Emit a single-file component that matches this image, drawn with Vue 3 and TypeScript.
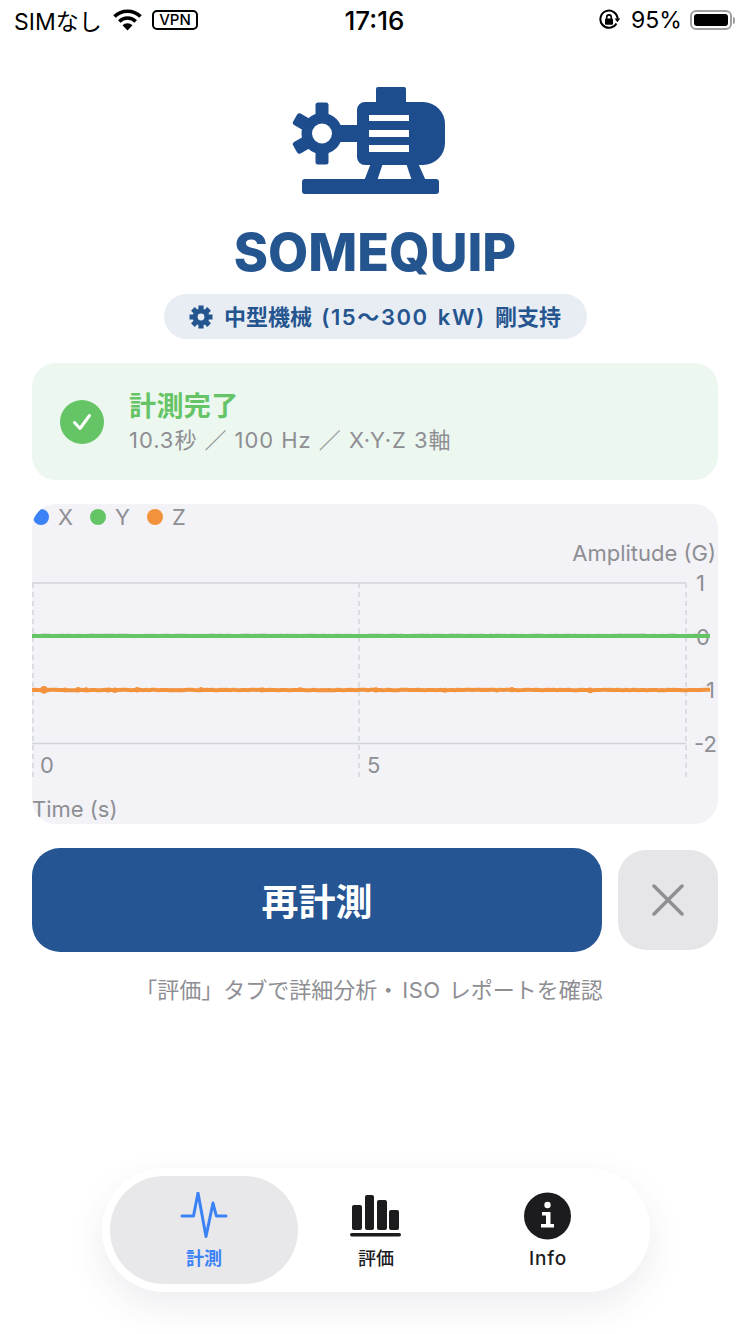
<template>
  <div class="page">
    <header class="status-bar">
      <div class="status-left">
        <span class="carrier">SIMなし</span>
        <svg class="wifi" width="29" height="22" viewBox="0 0 29 22">
          <path d="M1.5 7.6a18.4 18.4 0 0 1 26 0" />
          <path d="M6.3 12.4a11.6 11.6 0 0 1 16.4 0" />
          <path class="wifi-dot" d="M14.5 21.5l-5-5.2a7 7 0 0 1 10 0z" />
        </svg>
        <span class="vpn">VPN</span>
      </div>
      <span class="clock">17:16</span>
      <div class="status-right">
        <svg width="22" height="22" viewBox="0 0 22 22">
          <path class="lock-ring" d="M18.4 14.6A8.6 8.6 0 1 1 19.6 10" />
          <path class="lock-fill" d="M16.6 9.6h5.6l-2.8 3.6z" />
          <rect class="lock-fill" x="7" y="9.6" width="8" height="6.2" rx="1" />
          <path class="lock-ring thin" d="M8.7 10V8.2a2.3 2.3 0 0 1 4.6 0V10" />
        </svg>
        <span class="battery-text">95%</span>
        <div class="battery">
          <div class="battery-level"></div>
        </div>
        <div class="battery-cap"></div>
      </div>
    </header>

    <main class="content">
      <svg class="logo" width="153" height="107" viewBox="292 87 153 107">
        <circle cx="322" cy="133.5" r="20.5" />
        <rect
          v-for="angle in [0, 180, -60, -120]"
          :key="angle"
          x="315.5"
          y="102.5"
          width="13"
          height="16"
          rx="2.5"
          :transform="`rotate(${angle} 322 133.5)`"
        />
        <circle class="logo-hole" cx="322" cy="133.5" r="10" />
        <rect x="338" y="125" width="28" height="17" />
        <rect x="376" y="87" width="30" height="20" rx="2" />
        <path
          fill-rule="evenodd"
          d="M365 102h58a22 22 0 0 1 22 22v19a22 22 0 0 1-22 22h-58a8 8 0 0 1-8-8v-47a8 8 0 0 1 8-8zM369 115v6h40v-6zM369 130v7h40v-7zM369 145v7h40v-7z"
        />
        <path d="M371 163h12l-6 18h-13zM406 163h12l8 18h-14z" />
        <rect x="302" y="179" width="137" height="15" rx="3" />
      </svg>

      <h1 class="title">SOMEQUIP</h1>

      <div class="machine-pill">
        <svg width="24" height="24" viewBox="0 0 24 24">
          <path :d="pillGear" fill-rule="evenodd" />
        </svg>
        <span class="pill-text">中型機械<span class="latin"> (15～300 kW) </span>剛支持</span>
      </div>

      <section class="result-card">
        <div class="check">
          <svg width="44" height="44" viewBox="0 0 44 44">
            <path d="M14.5 22.5l5.5 6 9.5-13" />
          </svg>
        </div>
        <div class="result-text">
          <div class="result-title">計測完了</div>
          <div class="result-sub">10.3秒 ／ 100 Hz ／ X·Y·Z 3軸</div>
        </div>
      </section>

      <section class="chart-card">
        <div class="legend">
          <div v-for="item in legend" :key="item.name" class="legend-item">
            <i class="legend-dot" :style="{ background: item.color }"></i>
            <span>{{ item.name }}</span>
          </div>
        </div>
        <svg class="chart" width="686" height="294" viewBox="32 530 686 294">
          <text class="axis" x="716" y="561" text-anchor="end">Amplitude (G)</text>
          <line class="grid" x1="32" y1="583" x2="686" y2="583" />
          <line class="grid" x1="32" y1="743.5" x2="686" y2="743.5" />
          <line v-for="x in [33, 359, 686]" :key="x" class="grid-dash" :x1="x" y1="583" :x2="x" y2="779" />
          <text class="axis" x="696" y="591">1</text>
          <text class="axis" x="696" y="645">0</text>
          <text class="axis" x="696" y="698">-1</text>
          <text class="axis" x="694" y="752">-2</text>
          <text class="axis" x="40" y="773">0</text>
          <text class="axis" x="367" y="773">5</text>
          <text class="axis" x="32" y="817">Time (s)</text>
          <polyline class="trace noise" :points="noiseLine" />
          <line class="trace blue" x1="32" y1="637" x2="710" y2="637" />
          <line class="trace green" x1="32" y1="636" x2="710" y2="636" />
          <polyline class="trace orange" :points="orangeLine" />
          <circle v-for="b in orangeBlobs" :key="b.x" class="blob" :cx="b.x" :cy="b.y" :r="b.r" />
        </svg>
      </section>

      <div class="actions">
        <button class="primary">再計測</button>
        <button class="cancel" aria-label="閉じる">
          <svg width="32" height="32" viewBox="0 0 32 32">
            <path d="M2 2l28 28M30 2L2 30" />
          </svg>
        </button>
      </div>

      <p class="hint">「評価」タブで詳細分析・<span class="iso">ISO</span> レポートを確認</p>
    </main>

    <nav class="tab-bar">
      <div class="tab active">
        <svg width="48" height="48" viewBox="0 0 48 48">
          <path class="pulse" d="M2 24h11.5L18 1l8 43.5 7-33.5 3.3 13H46" />
        </svg>
        <span>計測</span>
      </div>
      <div class="tab">
        <svg width="52" height="48" viewBox="0 0 52 48">
          <rect x="2" y="13" width="10" height="25" rx="2" />
          <rect x="15" y="3" width="9" height="35" rx="2" />
          <rect x="27" y="8" width="10" height="30" rx="2" />
          <rect x="39" y="18" width="10" height="20" rx="2" />
          <rect x="0" y="41" width="51" height="3.5" rx="1.7" />
        </svg>
        <span>評価</span>
      </div>
      <div class="tab">
        <svg width="48" height="48" viewBox="0 0 48 48">
          <circle cx="23.5" cy="24" r="23.5" />
          <circle class="info-mark" cx="23.5" cy="13" r="3.2" />
          <path class="info-mark" d="M18 20h8.5v12H30v3.5H17V32h5V23.5h-4z" />
        </svg>
        <span class="info-label">Info</span>
      </div>
    </nav>
  </div>
</template>

<script setup lang="ts">
const legend = [
  { name: "X", color: "#3b82f6" },
  { name: "Y", color: "#65c466" },
  { name: "Z", color: "#f2923c" },
];

// gear outline as a polygon, with a round hole in the middle
function gearPath(cx: number, cy: number, outer: number, inner: number, hole: number, teeth: number, halfTooth: number): string {
  const pts: string[] = [];
  for (let i = 0; i < teeth; i++) {
    const a = (i / teeth) * Math.PI * 2 - Math.PI / 2;
    const perp = a + Math.PI / 2;
    const dx = Math.cos(a);
    const dy = Math.sin(a);
    const px = Math.cos(perp) * halfTooth;
    const py = Math.sin(perp) * halfTooth;
    pts.push(`${cx + dx * inner - px},${cy + dy * inner - py}`);
    pts.push(`${cx + dx * outer - px},${cy + dy * outer - py}`);
    pts.push(`${cx + dx * outer + px},${cy + dy * outer + py}`);
    pts.push(`${cx + dx * inner + px},${cy + dy * inner + py}`);
  }
  const ring = `M${pts.join("L")}Z`;
  const h = `M${cx - hole},${cy}a${hole},${hole} 0 1 0 ${hole * 2},0a${hole},${hole} 0 1 0 ${-hole * 2},0Z`;
  return ring + h;
}

const pillGear = gearPath(12, 12, 11.5, 8, 3.4, 8, 2.6);

// small seeded generator so the sensor noise looks the same on each load
let seed = 17;
function rand(): number {
  seed = (seed * 1103515245 + 12345) % 2147483648;
  return seed / 2147483648;
}

const noisePts: string[] = [];
const orangePts: string[] = [];
for (let x = 32; x <= 710; x += 3) {
  noisePts.push(`${x},${634.2 + rand() * 0.6}`);
  orangePts.push(`${x},${690 + (rand() - 0.5) * 0.7}`);
}
const noiseLine = noisePts.join(" ");
const orangeLine = orangePts.join(" ");

const orangeBlobs: { x: number; y: number; r: number }[] = [44, 65, 78, 86, 108, 115, 137, 201, 262, 300, 376, 445, 512, 590].map((x) => ({
  x,
  y: 690 + (rand() - 0.5) * 0.8,
  r: x === 44 ? 3.8 : 2.4 + rand() * 0.6,
}));
</script>

<style scoped>
.page {
  width: 750px;
  height: 1334px;
  display: flex;
  flex-direction: column;
  align-items: center;
  background: #fff;
  overflow: hidden;
  font-family: Inter, "Noto Sans CJK JP", sans-serif;
}

.status-bar {
  width: 100%;
  height: 40px;
  box-sizing: border-box;
  padding: 0 15px 0 14px;
  display: grid;
  grid-template-columns: 1fr auto 1fr;
  align-items: center;
  color: #000;
  font-size: 23px;
}

.status-left {
  display: flex;
  align-items: center;
}

.carrier {
  width: 99px;
  white-space: nowrap;
}

.wifi path {
  fill: none;
  stroke: #000;
  stroke-width: 3.6;
}

.wifi .wifi-dot {
  fill: #000;
  stroke: none;
}

.vpn {
  margin-left: 10px;
  width: 46px;
  height: 20px;
  box-sizing: border-box;
  border: 2px solid #000;
  border-radius: 5px;
  font-size: 15px;
  font-weight: 500;
  line-height: 16px;
  text-align: center;
}

.clock {
  font-size: 26px;
  font-weight: 500;
}

.status-right {
  display: flex;
  align-items: center;
  justify-content: flex-end;
}

.status-right svg {
  margin-left: 1px;
}

.lock-ring {
  fill: none;
  stroke: #000;
  stroke-width: 2;
}

.lock-ring.thin {
  stroke-width: 1.6;
}

.lock-fill {
  fill: #000;
}

.battery-text {
  margin-left: 11px;
  width: 50px;
}

.battery {
  margin-left: 9px;
  width: 42px;
  height: 20px;
  box-sizing: border-box;
  border: 2px solid #a0a0a0;
  border-radius: 6px;
  padding: 2px;
}

.battery-level {
  height: 100%;
  border-radius: 3px;
  background: #000;
}

.battery-cap {
  margin-left: 1px;
  width: 2px;
  height: 7px;
  border-radius: 0 2px 2px 0;
  background: #a0a0a0;
}

.content {
  width: 686px;
  display: flex;
  flex-direction: column;
  align-items: center;
}

.logo {
  margin-top: 47px;
  margin-right: 13px;
  fill: #1e4d8e;
}

.logo .logo-hole {
  fill: #fff;
}

.title {
  margin: 30px 0 0;
  font-size: 52px;
  line-height: 58px;
  font-weight: 800;
  color: #25558f;
}

.machine-pill {
  margin-top: 12px;
  width: 423px;
  height: 45px;
  display: flex;
  align-items: center;
  justify-content: center;
  gap: 11px;
  border-radius: 23px;
  background: #e8edf4;
  color: #25558f;
  font-size: 22px;
  font-weight: 600;
  white-space: nowrap;
}

.machine-pill svg {
  fill: #25558f;
}

.pill-text {
  margin-bottom: 3px;
}

.latin {
  letter-spacing: 1.6px;
  word-spacing: 2px;
}

.result-card {
  margin-top: 24px;
  width: 100%;
  height: 117px;
  box-sizing: border-box;
  padding-left: 28px;
  display: flex;
  align-items: center;
  gap: 25px;
  border-radius: 24px;
  background: #ecf7ef;
}

.check {
  width: 44px;
  height: 44px;
  border-radius: 50%;
  background: #65c466;
}

.check path {
  fill: none;
  stroke: #fff;
  stroke-width: 3;
  stroke-linecap: round;
  stroke-linejoin: round;
}

.result-title {
  font-size: 27px;
  line-height: 36px;
  font-weight: 700;
  letter-spacing: 0.4px;
  color: #65c466;
}

.result-sub {
  font-size: 22px;
  line-height: 30px;
  letter-spacing: 0.95px;
  color: #8e8e93;
  white-space: nowrap;
}

.chart-card {
  margin-top: 24px;
  width: 100%;
  height: 320px;
  border-radius: 24px;
  background: #f2f2f7;
  overflow: hidden;
}

.legend {
  height: 26px;
  padding-left: 1px;
  display: flex;
  align-items: center;
  font-size: 22px;
  color: #8e8e93;
}

.legend-item {
  width: 57px;
  display: flex;
  align-items: center;
  gap: 9px;
}

.legend-dot {
  width: 16px;
  height: 16px;
  border-radius: 50%;
}

.chart {
  display: block;
}

.axis {
  font-size: 22px;
  fill: #8e8e93;
}

.grid {
  stroke: #d1d5d9;
  stroke-width: 1.5;
}

.grid-dash {
  stroke: #d1d5d9;
  stroke-width: 1.5;
  stroke-dasharray: 5 4;
}

.trace {
  fill: none;
}

.noise {
  stroke: #b9c4b9;
  stroke-width: 1.5;
}

.blue {
  stroke: #3b62d6;
  stroke-width: 2;
}

.green {
  stroke: #65c466;
  stroke-width: 4;
}

.orange {
  stroke: #f2923c;
  stroke-width: 4;
}

.blob {
  fill: #f2923c;
}

.actions {
  margin-top: 24px;
  width: 100%;
  display: flex;
  align-items: center;
  gap: 16px;
}

.actions button {
  border: none;
  padding: 0;
  font-family: inherit;
}

.primary {
  flex: 1;
  height: 104px;
  border-radius: 28px;
  background: #255592;
  color: #fff;
  font-size: 37px;
  font-weight: 700;
}

.cancel {
  width: 100px;
  height: 100px;
  display: flex;
  align-items: center;
  justify-content: center;
  border-radius: 28px;
  background: #e6e6e9;
}

.cancel path {
  fill: none;
  stroke: #8e8e93;
  stroke-width: 3.5;
  stroke-linecap: round;
}

.hint {
  margin: 23px 12px 0 0;
  font-size: 22px;
  line-height: 30px;
  color: #8e8e93;
  white-space: nowrap;
}

.iso {
  margin: 0 2px 0 3px;
  letter-spacing: 0.5px;
}

.tab-bar {
  margin-top: auto;
  margin-bottom: 42px;
  margin-left: 2px;
  width: 548px;
  height: 124px;
  box-sizing: border-box;
  padding: 0 16px;
  display: grid;
  grid-template-columns: repeat(3, 172px);
  border-radius: 62px;
  background: #fff;
  box-shadow: 0 14px 36px rgba(50, 60, 90, 0.09);
}

.tab {
  position: relative;
  display: flex;
  flex-direction: column;
  align-items: center;
  padding-top: 24px;
  color: #1c1c1e;
  fill: #1c1c1e;
  font-size: 18px;
  font-weight: 500;
}

.tab svg,
.tab span {
  position: relative;
}

.tab span {
  margin-top: 7px;
  line-height: 24px;
}

.tab .info-label {
  font-size: 19px;
  letter-spacing: 0.8px;
}

.tab.active {
  color: #3b82f6;
  font-weight: 700;
}

.tab.active::before {
  content: "";
  position: absolute;
  top: 8px;
  bottom: 8px;
  left: -8px;
  right: -8px;
  border-radius: 54px;
  background: #e8e8ea;
}

.pulse {
  fill: none;
  stroke: #3b82f6;
  stroke-width: 3;
  stroke-linecap: round;
  stroke-linejoin: round;
}

.info-mark {
  fill: #fff;
}
</style>
